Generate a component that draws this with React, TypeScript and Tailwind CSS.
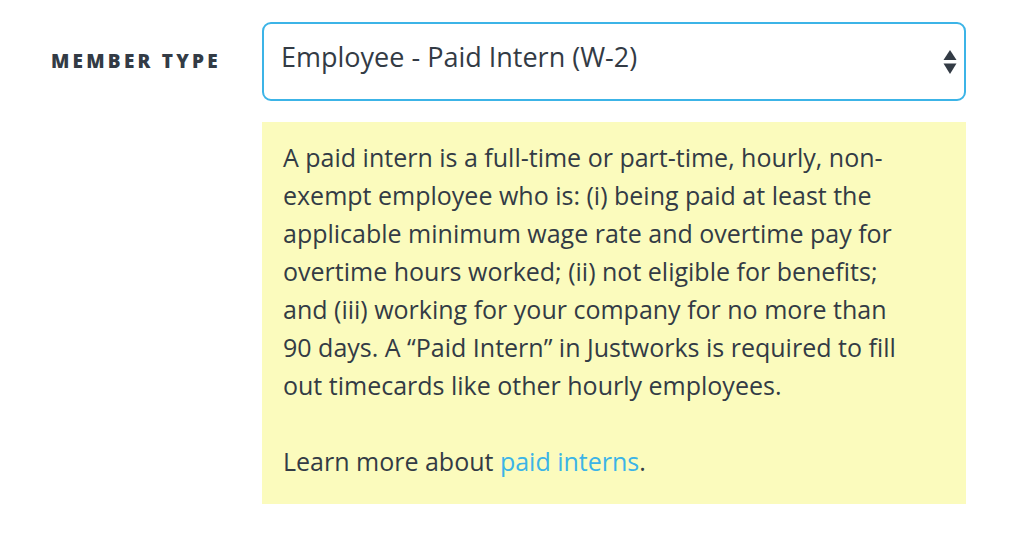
export default function App() {
  return (
    <div
      className="w-[1012px] h-[546px] bg-white text-[#333b45]"
      style={{ fontFamily: "'Open Sans', Lato, sans-serif" }}
    >
      <div className="flex items-start pt-[22px]">
        <label className="w-[262px] pl-[51px] pt-[26px] text-[19px] font-extrabold uppercase tracking-[0.17em] leading-[26px]">
          Member Type
        </label>
        <div className="w-[704px] flex flex-col gap-[21px]">
          <div className="relative h-[79px] rounded-[9px] border-2 border-[#3cb4e7] flex items-center pb-[8px] pl-[17px] pr-[40px] text-[27px]">
            <span>Employee - Paid Intern (W-2)</span>
            <svg
              className="absolute right-[7px] top-1/2 -translate-y-1/2"
              width="14"
              height="26"
              viewBox="0 0 14 26"
            >
              <path d="M7 1 L13.5 11 L0.5 11 Z" fill="#333b45" />
              <path d="M0.5 14.5 L13.5 14.5 L7 25 Z" fill="#333b45" />
            </svg>
          </div>
          <div className="bg-[#fbfbbd] px-[21px] pt-[16px] pb-[24px] text-[25px] leading-[38px] whitespace-nowrap">
            <p>
              A paid intern is a full-time or part-time, hourly, non-
              <br />
              exempt employee who is: (i) being paid at least the
              <br />
              applicable minimum wage rate and overtime pay for
              <br />
              overtime hours worked; (ii) not eligible for benefits;
              <br />
              and (iii) working for your company for no more than
              <br />
              90 days. A “Paid Intern” in Justworks is required to fill
              <br />
              out timecards like other hourly employees.
            </p>
            <p className="mt-[38px]">
              Learn more about <a className="text-[#3cb4e7]">paid interns</a>.
            </p>
          </div>
        </div>
      </div>
    </div>
  );
}
